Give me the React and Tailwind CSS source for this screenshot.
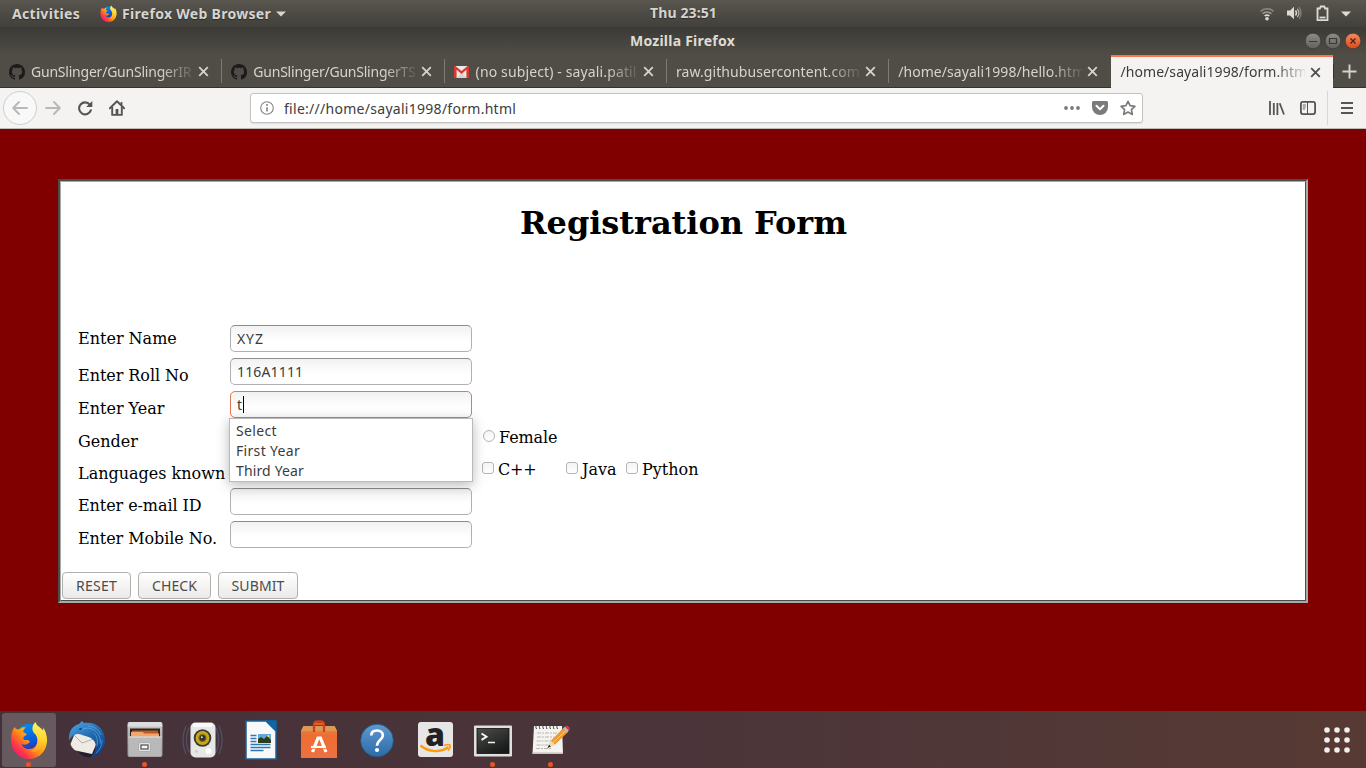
import React from 'react';

const CloseX = ({ color }) => (
  <svg width="11" height="11" viewBox="0 0 11 11" className="shrink-0">
    <path d="M1.2 1.2l8.6 8.6M9.8 1.2L1.2 9.8" stroke={color} strokeWidth="1.8" fill="none" />
  </svg>
);

const GithubIcon = () => (
  <svg width="16" height="16" viewBox="0 0 16 16" className="mt-px mr-1.5 shrink-0">
    <path
      fill="#1b1b1b"
      d="M8 0C3.58 0 0 3.58 0 8c0 3.54 2.29 6.53 5.47 7.59.4.07.55-.17.55-.38 0-.19-.01-.82-.01-1.49-2.01.37-2.53-.49-2.69-.94-.09-.23-.48-.94-.82-1.13-.28-.15-.68-.52-.01-.53.63-.01 1.08.58 1.23.82.72 1.21 1.87.87 2.33.66.07-.52.28-.87.51-1.07-1.78-.2-3.64-.89-3.64-3.95 0-.87.31-1.59.82-2.15-.08-.2-.36-1.02.08-2.12 0 0 .67-.21 2.2.82.64-.18 1.32-.27 2-.27s1.36.09 2 .27c1.53-1.04 2.2-.82 2.2-.82.44 1.1.16 1.92.08 2.12.51.56.82 1.27.82 2.15 0 3.07-1.87 3.75-3.65 3.95.29.25.54.73.54 1.48 0 1.07-.01 1.93-.01 2.2 0 .21.15.46.55.38A8.01 8.01 0 0 0 16 8c0-4.42-3.58-8-8-8z"
    />
  </svg>
);

const GmailIcon = () => (
  <svg width="15" height="12" viewBox="0 0 15 12" className="mt-0.5 mr-[7px] shrink-0">
    <path d="M1 0h13v12H1z" fill="#e9e9e9" />
    <path d="M2.6 12l4.9-5 4.900 5z" fill="#d4d4d4" />
    <path d="M0 1.2C0 .4.6 0 1.4 0L7.5 5 13.6 0c.8 0 1.4.4 1.4 1.2V11c0 .6-.4 1-1 1h-1.6V3.8L7.5 8 2.6 3.8V12H1c-.6 0-1-.4-1-1z" fill="#d9392e" />
  </svg>
);

const FirefoxLogo = ({ id, size }) => (
  <svg width={size} height={size} viewBox="0 0 36 38" className="shrink-0">
    <defs>
      <linearGradient id={id + 'a'} x1="1" y1="0.1" x2="0.1" y2="0.9">
        <stop offset="0" stopColor="#fff44f" />
        <stop offset="0.3" stopColor="#ffc21c" />
        <stop offset="0.55" stopColor="#ff8a16" />
        <stop offset="0.8" stopColor="#ff3647" />
        <stop offset="1" stopColor="#e31587" />
      </linearGradient>
      <linearGradient id={id + 'b'} x1="0.3" y1="0" x2="0.6" y2="1">
        <stop offset="0" stopColor="#0090ed" />
        <stop offset="0.6" stopColor="#0a5bdc" />
        <stop offset="1" stopColor="#3b2a9c" />
      </linearGradient>
      <linearGradient id={id + 'c'} x1="0.5" y1="0" x2="0.4" y2="1">
        <stop offset="0" stopColor="#fff36b" />
        <stop offset="0.55" stopColor="#ffd52e" />
        <stop offset="1" stopColor="#ff9a1f" />
      </linearGradient>
    </defs>
    <circle cx="18.5" cy="17" r="14" fill={`url(#${id}b)`} />
    <path d="M3.5 6C1.2 9 0 14 0 19.5 0 30 8 38 18 38s18-8 18-18.500c0-5-1.500-9-3.500-12 .5 7-2 10-5.500 12-1 5-4 8.500-9 8.500-3.500 0-6.500-2-7.500-5 2 1.200 4.500 1 6.500-.5 1.300-1 2-1 1.700-2-.7-1.800-3-1.300-4.700-1.400-1.500-.3-2-1.500-1.500-2.800.7-1.500 3-1.800 3.300-3 .1-.7-2.800-1.300-3.700-2.500.3-2 1.500-3.300 2.700-4.500-3-.3-5 .3-6.600 2C6.500 8.800 4.500 7.800 3.500 6z" fill={`url(#${id}a)`} />
    <path d="M24.500 1C20.500 5 20.500 9.500 24 13c2.500 2.500 3.200 7 1.500 11.500-1 3-3.500 5-6.500 6 7 1.500 14-2.500 16-9.500 1.200-5-.2-10.500-3-14.500l.3 3.300C30.500 6.500 25.500 5.500 24.500 1z" fill={`url(#${id}c)`} />
  </svg>
);

const Tab = ({ icon, title, track, last }) => (
  <div className="flex h-8 w-[222.300px] shrink-0 items-center pl-[9px]">
    {icon}
    <div className={'mt-px flex-1 overflow-hidden whitespace-nowrap text-[14px] leading-5 text-[#d6d3cd] [mask-image:linear-gradient(to_right,#000_calc(100%-32px),transparent_calc(100%+4px))] ' + track}>
      {title}
    </div>
    <div className="mt-px mr-[12px] ml-[5px]">
      <CloseX color="#d6d3cd" />
    </div>
    <div className={'h-6 w-px ' + (last ? 'bg-transparent' : 'bg-[#7c7a73]')} />
  </div>
);

const FieldRow = ({ label, first, height, track = '', children }) => (
  <div className={'flex ' + height}>
    <div className={'w-[152px] whitespace-nowrap text-[16px] leading-[19px] ' + (first ? 'pt-[4px] ' : 'pt-[8px] ') + track}>{label}</div>
    {children}
  </div>
);

const Input = ({ value, focus, track = '' }) => (
  <div
    className={
      "flex h-[27px] w-[242px] items-center rounded-[5px] border bg-linear-to-b from-[#f2f2f2] to-white to-60% pl-[6px] font-['Noto_Sans',sans-serif] text-[14px] leading-5 text-[#3c3c3c] " +
      (focus ? 'border-t-[#e07b55] border-r-[#e07b55] border-b-[#e07b55] border-l-[#e07b55] ' : 'border-t-[#8c8c8a] border-r-[#b0b0ae] border-b-[#b0b0ae] border-l-[#b0b0ae] ') + track
    }
  >
    {value}
    {focus && <span className="ml-px h-[17px] w-px bg-black" />}
  </div>
);

const Check = ({ label, box, round }) => (
  <div className={'flex items-center text-[16px] leading-[19px] ' + box}>
    <span className={'mt-[-2px] mr-[4px] size-3 shrink-0 border border-[#b4b4b2] bg-linear-to-b from-[#f4f4f4] to-white ' + (round ? 'rounded-full' : 'rounded-[3px]')} />
    {label}
  </div>
);

const Button = ({ label, size }) => (
  <div className={"flex h-[27px] items-center justify-center rounded-[4px] border border-[#b2b0ad] bg-linear-to-b from-white to-[#ebeae8] font-['Noto_Sans',sans-serif] text-[14px] leading-5 text-[#4c4c4c] " + size}>
    {label}
  </div>
);

const DockItem = ({ children, dot, active }) => (
  <div className={'relative flex h-[54px] w-[54px] shrink-0 items-center justify-center rounded-[3px] ' + (active ? 'bg-[#665a5e]' : '')}>
    {children}
    {dot && <span className="absolute bottom-0 left-[24px] size-[5px] rounded-full bg-[#e95420]" />}
  </div>
);

const Thunderbird = () => (
  <svg width="38" height="40" viewBox="0 0 38 40">
    <defs>
      <linearGradient id="tb" x1="0.2" y1="0" x2="0.8" y2="1">
        <stop offset="0" stopColor="#4b9fe0" />
        <stop offset="0.5" stopColor="#1f66ad" />
        <stop offset="1" stopColor="#0d3a83" />
      </linearGradient>
    </defs>
    <path d="M8 29c4 6 9 9 16 8l4-8z" fill="#241d2b" />
    <path d="M7 13L2.500 24c1 3 3 5.500 5 6.500L24 34l5-12-6-8z" fill="#eeebe5" />
    <path d="M6 15l8 8 3.500-1.200 8-2.800" fill="none" stroke="#b5b0aa" strokeWidth="1" />
    <path d="M1 21C0 11 5 5.500 11 4l3-3 2 2C28 1 37 9 37 20c0 9-6 16-15 18 4-4 7-9 5.500-14-1-4-4.500-6.500-8.500-7.500-5-1-8-4-13-1.500C3.500 16.500 2 18.500 1 21z" fill="url(#tb)" />
    <path d="M13 10.500c3-3 8-3 12-1 5 2.500 8 8 7 14M20 6c6 0 11 4 13 9M28 33c4-3 6-8 6-13M26 13c3 3 4 8 3 13" fill="none" stroke="#62b2ea" strokeWidth="0.9" opacity="0.7" />
    <path d="M10.500 9c1.500-1 3-1 4 0-1 1-3 1-4 0z" fill="#0a2f66" />
  </svg>
);

const Files = () => (
  <svg width="38" height="40" viewBox="0 0 38 40">
    <defs>
      <linearGradient id="fl" x1="0" y1="0" x2="0" y2="1">
        <stop offset="0" stopColor="#c9c9c9" />
        <stop offset="1" stopColor="#8e8e8e" />
      </linearGradient>
    </defs>
    <rect x="1.500" y="2" width="35" height="35" rx="2" fill="url(#fl)" />
    <path d="M3 2h32l1.500 4.500h-35z" fill="#dedede" />
    <rect x="4" y="8.500" width="30" height="9" fill="#2b2522" />
    <path d="M6 10.500h26v8H6z" fill="#c05b22" />
    <path d="M5 12h12l1 1.500h15v4H5z" fill="#f2a56c" />
    <rect x="2.500" y="16.500" width="33" height="20" rx="1" fill="#b9b9b9" />
    <path d="M2.500 17h33" stroke="#e2e2e2" />
    <rect x="12.500" y="22.500" width="12" height="9" rx="1.500" fill="#e4e4e4" stroke="#999" strokeWidth="0.6" />
    <rect x="15" y="25" width="7" height="4" fill="#f6f6f6" stroke="#4f4f4f" strokeWidth="1.200" />
  </svg>
);

const Rhythmbox = () => (
  <svg width="42" height="40" viewBox="0 0 42 40">
    <g fill="none" stroke="#60779c" strokeWidth="1.200" opacity="0.45">
      <path d="M7 8C3.500 15 3.500 25 7 32M4 6C0 15 0 25 4 34M34 8c3.500 7 3.500 17 0 24M37 6c4 9 4 19 0 28" />
    </g>
    <rect x="8.500" y="2.500" width="25" height="35" rx="5" fill="#e7e7e5" />
    <rect x="10.500" y="3" width="20" height="4" rx="2" fill="#fafafa" />
    <circle cx="20.500" cy="18" r="8.800" fill="#3c3b36" />
    <circle cx="20.500" cy="18" r="6.900" fill="#c9a918" />
    <circle cx="20.500" cy="18" r="4.200" fill="#8b7616" />
    <circle cx="20.500" cy="18" r="3" fill="#33322e" />
    <circle cx="19.800" cy="17.200" r="1" fill="#ddd" />
    <circle cx="14.500" cy="31.500" r="1.300" fill="#c8c8c8" />
    <circle cx="26.500" cy="31" r="3" fill="#fff" />
  </svg>
);

const Writer = () => (
  <svg width="34" height="42" viewBox="0 0 34 42">
    <path d="M2 2h20l10 10v28H2z" fill="#f8f8f8" stroke="#17619b" strokeWidth="1.500" />
    <path d="M21.500 1.300h11.200V12.500z" fill="#0a68a8" />
    <g stroke="#2c78b3" strokeWidth="1.300">
      <path d="M6.500 16.500h6M6.500 19.500h6M6.500 22.500h6M6.500 25.500h20M6.500 28.500h20M6.500 31.500h13" />
    </g>
    <rect x="14" y="15" width="13" height="9" fill="#62a8d8" />
    <path d="M14 24v-4l3-2 3 2 3-3 4 4v3z" fill="#2c3d1c" />
    <circle cx="24.500" cy="17" r="1.100" fill="#f4e54a" />
  </svg>
);

const Software = () => (
  <svg width="38" height="40" viewBox="0 0 38 40">
    <defs>
      <linearGradient id="sw" x1="0" y1="0" x2="0" y2="1">
        <stop offset="0" stopColor="#e9884b" />
        <stop offset="0.3" stopColor="#ef6d30" />
        <stop offset="1" stopColor="#ee7042" />
      </linearGradient>
    </defs>
    <path d="M3.500 6h31l2.500 5v27H1V11z" fill="url(#sw)" />
    <path d="M3.500 6h31l2.500 5H1z" fill="#dd9759" />
    <path d="M14 12V5c0-3 1.500-3.500 3.500-3.500h3c2 0 3.500.5 3.500 3.500v7" fill="none" stroke="#c8421a" strokeWidth="2.300" />
    <path d="M14.500 4h9" stroke="#e75f28" strokeWidth="2.500" />
    <path d="M12.500 32l5.500-14h2.500L26 32" fill="none" stroke="#fff" strokeWidth="3.200" />
    <path d="M11 27h15" stroke="#fff" strokeWidth="2.200" />
    <path d="M11 28.700h17" stroke="#ef6d30" strokeWidth="0.900" />
  </svg>
);

const Help = () => (
  <svg width="36" height="36" viewBox="0 0 36 36">
    <defs>
      <linearGradient id="hp" x1="0" y1="0" x2="0" y2="1">
        <stop offset="0" stopColor="#5e9ad0" />
        <stop offset="1" stopColor="#2d6ba8" />
      </linearGradient>
    </defs>
    <circle cx="18" cy="18.500" r="16.300" fill="url(#hp)" stroke="#245b92" strokeWidth="0.800" />
    <path d="M12.300 13.500c0-3.400 2.500-5 5.700-5 3.300 0 5.800 1.900 5.800 4.900 0 4.600-5.900 4.900-5.900 10.400" fill="none" stroke="#fff" strokeWidth="2.700" />
    <circle cx="18" cy="28" r="2.100" fill="#fff" />
  </svg>
);

const Amazon = () => (
  <div className="relative flex size-[35px] justify-center rounded-[3px] bg-[#e6e6e6]">
    <span className="mt-[-4px] font-['Open_Sans',sans-serif] text-[32px] leading-8 font-extrabold text-[#222]">a</span>
    <svg width="35" height="35" viewBox="0 0 35 35" className="absolute inset-0">
      <path d="M2.500 23.500c8.500 7 20 7.300 28 1.500" fill="none" stroke="#ff9a0c" strokeWidth="2.300" />
      <path d="M26 23.500c2.500-1 5-1.200 6-.4.500 1.200-.4 3.700-2 5.500" fill="none" stroke="#ff9a0c" strokeWidth="1.600" />
    </svg>
  </div>
);

const Terminal = () => (
  <svg width="40" height="34" viewBox="0 0 40 34" className="mt-0.5">
    <defs>
      <linearGradient id="tm" x1="0" y1="0" x2="0.600" y2="1">
        <stop offset="0" stopColor="#4b4e4a" />
        <stop offset="1" stopColor="#191b1a" />
      </linearGradient>
    </defs>
    <rect x="1" y="1.500" width="38" height="31" rx="1" fill="#e0dfdd" />
    <rect x="4" y="4.500" width="32" height="25" fill="url(#tm)" stroke="#111" strokeWidth="0.800" />
    <path d="M8.500 9.500l5 3.200-5 3.200" fill="none" stroke="#f5f5f5" strokeWidth="1.900" />
    <path d="M15 18.500h7" stroke="#f5f5f5" strokeWidth="1.500" />
  </svg>
);

const Notes = () => (
  <svg width="40" height="40" viewBox="0 0 40 40">
    <path d="M3 6h28l1 28H1.500z" fill="#f5f3ef" />
    <path d="M1.500 33.200h30.500" stroke="#c4c1bb" strokeWidth="1.500" />
    <g stroke="#3c3935" strokeWidth="1" fill="none">
      <path d="M5.500 9c-1.500-3 0-5 1.800-4M9 9c-1.500-3 0-5 1.800-4M12.500 9c-1.500-3 0-5 1.800-4M16 9c-1.500-3 0-5 1.800-4M19.500 9c-1.500-3 0-5 1.800-4M23 9c-1.500-3 0-5 1.800-4M26.500 9c-1.500-3 0-5 1.800-4" />
    </g>
    <g stroke="#b9b7b4" strokeWidth="1.100" strokeDasharray="4 1 2 1">
      <path d="M6 13h20M6 17h17M5.500 21h15M5.500 25h12M5 28.500h16" />
    </g>
    <path d="M16.500 28l3.500-7.500L32.500 8l4.500 4L24 24.500z" fill="#ee9a30" />
    <path d="M19 25.500l17-16" stroke="#fbd08a" strokeWidth="1" />
    <path d="M32 8.500l2-2 4 4-2 2z" fill="#bababa" />
    <path d="M34 6.500c2-2.500 6.500 1 4 4z" fill="#e3354b" />
    <path d="M16.500 28l3.500-7.300 3.800 3.800z" fill="#f3dbb5" />
    <path d="M16.500 28l1.600-3.300 1.800 1.800z" fill="#222" />
  </svg>
);

const dots = [4, 14, 24];

export default function App() {
  return (
    <div className="flex h-[768px] w-[1366px] flex-col overflow-hidden bg-[#800000] font-['Noto_Sans',sans-serif]">
      {/* Desktop top bar */}
      <div className="flex h-[27px] shrink-0 items-center justify-between bg-linear-to-b from-[#59564f] to-[#41403b] text-[14px] leading-5 font-bold text-[#d7d4ce] [text-shadow:0_1px_1px_#2b2a27]">
        <div className="flex w-[560px] items-center pl-3">
          <span className="w-[88px] tracking-[0.300px]">Activities</span>
          <FirefoxLogo id="fs" size={17} />
          <span className="ml-[5px] tracking-[0.300px]">Firefox Web Browser</span>
          <svg width="10" height="6" viewBox="0 0 10 6" className="ml-[5px]"><path d="M0 .5h10L5 5.500z" fill="#d7d4ce" /></svg>
        </div>
        <span className="mt-[-2px] ml-px tracking-[0.120px]">Thu 23:51</span>
        <div className="flex w-[560px] items-center justify-end pr-[15px]">
          <svg width="16" height="14" viewBox="0 0 16 14" className="mr-[11px]" fill="none">
            <path d="M1.500 4.500C5 .8 11 .8 14.500 4.500" stroke="#8a8882" strokeWidth="1.600" />
            <path d="M3.700 6.800c2.400-2.500 6.200-2.500 8.600 0" stroke="#a09d97" strokeWidth="1.600" />
            <path d="M5.700 9c1.300-1.300 3.300-1.300 4.600 0" stroke="#dedbd5" strokeWidth="1.700" />
            <circle cx="8" cy="11.800" r="1.800" fill="#dedbd5" />
          </svg>
          <svg width="16" height="14" viewBox="0 0 16 14" className="mr-[14px] mb-px" fill="none">
            <path d="M1 4.500h3L8 .8v12.400L4 9.500H1z" fill="#dedbd5" />
            <path d="M9.500 4.500c1.200 1.500 1.200 3.500 0 5" stroke="#dedbd5" strokeWidth="1.400" />
            <path d="M11.300 2.800c2 2.500 2 5.900 0 8.400" stroke="#b9b6b0" strokeWidth="1.300" />
            <path d="M13 1.200c2.700 3.400 2.700 8.200 0 11.600" stroke="#85837d" strokeWidth="1.200" />
          </svg>
          <svg width="13" height="17" viewBox="0 0 13 17" className="mr-[12px] mb-px" fill="none">
            <path d="M1.500 3.500h2.300l1-2h3.400l1 2h2.300v11.700h-10z" stroke="#dedbd5" strokeWidth="1.800" />
            <path d="M3.500 12.500h6" stroke="#dedbd5" strokeWidth="1.800" />
          </svg>
          <svg width="10" height="6" viewBox="0 0 10 6"><path d="M0 .5h10L5 5.500z" fill="#dedbd5" /></svg>
        </div>
      </div>

      {/* Window title */}
      <div className="flex h-[28px] shrink-0 items-center justify-between bg-linear-to-b from-[#3b3a36] to-[#504d46] text-[14px] leading-5 font-bold text-[#dfdbd2]">
        <span className="w-[59px]" />
        <span className="mt-[-1px] tracking-[0.240px]">Mozilla Firefox</span>
        <svg width="60" height="20" viewBox="0 0 60 20">
          <defs>
            <linearGradient id="wg" x1="0" y1="0" x2="0" y2="1"><stop offset="0" stopColor="#8f8c85" /><stop offset="1" stopColor="#62605a" /></linearGradient>
            <linearGradient id="wr" x1="0" y1="0" x2="0" y2="1"><stop offset="0" stopColor="#f58a63" /><stop offset="1" stopColor="#df4a18" /></linearGradient>
          </defs>
          <circle cx="7" cy="10" r="7.800" fill="url(#wg)" stroke="#33322e" strokeWidth="0.600" />
          <circle cx="27" cy="10" r="7.800" fill="url(#wg)" stroke="#33322e" strokeWidth="0.600" />
          <circle cx="47" cy="10" r="7.800" fill="url(#wr)" stroke="#33322e" strokeWidth="0.600" />
          <path d="M3 10.500h8M23.500 7.500h7v5h-7z" fill="none" stroke="#3a3934" strokeWidth="1.200" />
          <path d="M44.500 7.500l5 5M49.500 7.500l-5 5" stroke="#4a2418" strokeWidth="1.300" />
        </svg>
      </div>

      {/* Tab strip */}
      <div className="flex h-[33px] shrink-0 items-center border-b border-[#33322e] bg-[#504d46]">
        <Tab icon={<GithubIcon />} title="GunSlinger/GunSlingerIR" track="tracking-[-0.220px]" />
        <Tab icon={<GithubIcon />} title="GunSlinger/GunSlingerTS" track="tracking-[-0.220px]" />
        <Tab icon={<GmailIcon />} title="(no subject) - sayali.patil" track="tracking-[0.130px]" />
        <Tab title="raw.githubusercontent.com" track="tracking-[0.080px]" />
        <Tab title="/home/sayali1998/hello.htm" track="tracking-[0.060px]" last />
        <div className="mb-[-1px] flex h-[33px] w-[221.500px] shrink-0 items-center border-t-2 border-[#f4784c] bg-[#f4f3f2] pl-[9px]">
          <div className="mt-[-2px] flex-1 overflow-hidden text-[14px] leading-5 tracking-[0.060px] whitespace-nowrap text-[#3c3c3c] [mask-image:linear-gradient(to_right,#000_calc(100%-32px),transparent_calc(100%+4px))]">
            /home/sayali1998/form.htm
          </div>
          <div className="mt-[-1px] mr-[12px] ml-[5px]"><CloseX color="#4f4e4b" /></div>
        </div>
        <div className="flex flex-1 items-center justify-center border-l border-[#33322e]">
          <svg width="15" height="15" viewBox="0 0 15 15"><path d="M7.500 .5v14M.5 7.500h14" stroke="#d6d3cd" strokeWidth="1.900" /></svg>
        </div>
      </div>

      {/* Navigation toolbar */}
      <div className="flex h-[41px] shrink-0 items-center border-b border-[#bdbdbb] bg-[#f4f3f2]">
        <div className="ml-[3px] flex size-[34px] items-center justify-center rounded-full border border-[#cfcdcb] bg-[#f9f8f8]">
          <svg width="16" height="14" viewBox="0 0 16 14" fill="none" stroke="#b9b8b6" strokeWidth="1.900" strokeLinecap="round" strokeLinejoin="round"><path d="M15 7H1.500M7 1L1.200 7 7 13" /></svg>
        </div>
        <svg width="16" height="14" viewBox="0 0 16 14" className="ml-[8px]" fill="none" stroke="#b9b8b6" strokeWidth="1.900" strokeLinecap="round" strokeLinejoin="round"><path d="M1 7h13.500M9 1l5.800 6L9 13" /></svg>
        <svg width="16" height="16" viewBox="0 0 16 16" className="ml-[16px]" fill="none">
          <path d="M12.800 4.600A6 6 0 1 0 13.800 10.300" stroke="#565553" strokeWidth="2.100" strokeLinecap="round" />
          <path d="M15.300 1v6H9.200z" fill="#565553" />
        </svg>
        <svg width="16" height="16" viewBox="0 0 16 16" className="ml-[16px]" fill="none" stroke="#565553">
          <path d="M.9 8.300L8 1.300l7.100 7" strokeWidth="1.900" strokeLinecap="round" strokeLinejoin="round" />
          <path d="M3.200 7v7.900h9.600V7" strokeWidth="1.900" strokeLinejoin="round" />
          <path d="M12.500 2v3" strokeWidth="1.800" />
          <path d="M8 9v5.500" strokeWidth="2.800" />
        </svg>
        <div className="ml-[125px] flex h-[30px] w-[893px] items-center rounded-[3px] border border-[#c3c2c0] bg-white shadow-[0_1px_1px_rgba(0,0,0,0.08)]">
          <svg width="14" height="14" viewBox="0 0 14 14" className="ml-[9px]" fill="none">
            <circle cx="7" cy="7" r="6.300" stroke="#838281" strokeWidth="1.100" />
            <path d="M7 6.200v4.300" stroke="#737271" strokeWidth="1.400" /><circle cx="7" cy="4" r="0.900" fill="#737271" />
          </svg>
          <span className="mt-px ml-[10px] flex-1 text-[14px] leading-5 tracking-[0.280px] text-[#3c3c3c]">file:///home/sayali1998/form.html</span>
          <svg width="16" height="4" viewBox="0 0 16 4" fill="#7c7b7a"><circle cx="2" cy="2" r="1.900" /><circle cx="8" cy="2" r="1.900" /><circle cx="14" cy="2" r="1.900" /></svg>
          <svg width="16" height="14" viewBox="0 0 16 14" className="ml-[12px]"><path d="M1.500 0h13c.8 0 1.500.6 1.500 1.500V6a8 8 0 0 1-16 0V1.500C0 .6.700 0 1.500 0z" fill="#7c7b7a" /><path d="M4.500 4.800L8 8.200l3.500-3.400" fill="none" stroke="#fff" strokeWidth="2" strokeLinecap="round" strokeLinejoin="round" /></svg>
          <svg width="16" height="16" viewBox="0 0 16 16" className="mr-[6px] ml-[12px]"><path d="M8 1.300l2.100 4.300 4.800.7-3.500 3.300.9 4.800L8 12.100l-4.300 2.300.9-4.800L1.100 6.300l4.800-.7z" fill="none" stroke="#7c7b7a" strokeWidth="1.700" strokeLinejoin="round" /></svg>
        </div>
        <svg width="16" height="14" viewBox="0 0 16 14" className="ml-[126px]" stroke="#565553" strokeWidth="1.800"><path d="M1 0v14M4.800 2v12M8.400 2v12M10.700 2.300L15 13.500" /></svg>
        <svg width="16" height="14" viewBox="0 0 16 14" className="ml-[15px]" fill="none"><rect x=".9" y=".9" width="14.200" height="12.200" rx="2" stroke="#565553" strokeWidth="1.800" /><path d="M7.500 1v12" stroke="#565553" /><path d="M2.800 4h3M2.800 6h3M2.800 8h2.200" stroke="#565553" strokeWidth="0.900" /></svg>
        <div className="ml-[11px] h-[34px] w-px bg-[#d8d7d5]" />
        <svg width="12" height="12" viewBox="0 0 12 12" className="ml-[13px]" stroke="#565553" strokeWidth="2"><path d="M0 1h12M0 6h12M0 11h12" /></svg>
      </div>

      {/* Page */}
      <div className="flex flex-1 justify-center pt-[50px] font-['DejaVu_Serif',serif] text-black">
        <div className="h-[424px] w-[1250px] border-2 border-t-[#4c4c4c] border-r-[#a9a9a9] border-b-[#a9a9a9] border-l-[#4c4c4c]">
          <div className="flex h-full flex-col border border-t-[#a9a9a9] border-r-[#4c4c4c] border-b-[#4c4c4c] border-l-[#a9a9a9] bg-white">
            <h1 className="mt-[23px] pl-px text-center text-[32px] leading-[37px] font-bold tracking-[-0.040px]">Registration Form</h1>
            <div className="mt-[83px] flex flex-col pl-[17px]">
              <FieldRow label="Enter Name" first height="h-[33px]"><Input value="XYZ" track="tracking-[0.900px]" /></FieldRow>
              <FieldRow label="Enter Roll No" height="h-[33px]" track="tracking-[-0.050px]"><Input value="116A1111" track="tracking-[0.150px]" /></FieldRow>
              <FieldRow label="Enter Year" height="h-[33px]">
                <div className="relative h-[27px]">
                  <Input value="t" focus />
                  <div className="absolute top-[27px] left-[-1px] z-10 h-[64px] w-[244px] border border-[#bcbab8] bg-white pt-[2px] pl-[6px] font-['Noto_Sans',sans-serif] text-[14px] leading-5 text-[#3c3c3c] shadow-[0_3px_12px_rgba(0,0,0,0.28)]">
                    <p className="tracking-[0.350px]">Select</p>
                    <p className="tracking-[0.320px]">First Year</p>
                    <p className="tracking-[0.140px]">Third Year</p>
                  </div>
                </div>
              </FieldRow>
              <FieldRow label="Gender" height="h-[32px]">
                <Check label="Female" round box="ml-[253px] h-[26px] tracking-[-0.100px]" />
              </FieldRow>
              <FieldRow label="Languages known" height="h-[32px]">
                <Check label="C++" box="ml-[252px] h-[26px] w-[84px] tracking-[-0.200px]" />
                <Check label="Java" box="h-[26px] w-[60px]" />
                <Check label="Python" box="h-[26px]" />
              </FieldRow>
              <FieldRow label="Enter e-mail ID" height="h-[33px]" track="tracking-[-0.080px]"><Input /></FieldRow>
              <FieldRow label="Enter Mobile No." height="h-[51px]" track="tracking-[-0.070px]"><Input /></FieldRow>
            </div>
            <div className="flex gap-[7px] pl-px">
              <Button label="RESET" size="w-[69px] tracking-[0.250px]" />
              <Button label="CHECK" size="w-[73px] tracking-[0.100px]" />
              <Button label="SUBMIT" size="w-[80px] tracking-[0.120px]" />
            </div>
          </div>
        </div>
      </div>

      {/* Dock */}
      <div className="flex h-[57px] shrink-0 items-center gap-1 bg-linear-to-r from-[#453139] via-[#4b353a] to-[#573a33] pr-[15px] pl-[2px]">
        <DockItem active dot><FirefoxLogo id="fd" size={38} /></DockItem>
        <DockItem><Thunderbird /></DockItem>
        <DockItem dot><Files /></DockItem>
        <DockItem><Rhythmbox /></DockItem>
        <DockItem><Writer /></DockItem>
        <DockItem><Software /></DockItem>
        <DockItem><Help /></DockItem>
        <DockItem><Amazon /></DockItem>
        <DockItem dot><Terminal /></DockItem>
        <DockItem dot><Notes /></DockItem>
        <svg width="28" height="28" viewBox="0 0 28 28" className="ml-auto" fill="#f2f0ef">
          {dots.map((y) => dots.map((x) => <circle key={x + '-' + y} cx={x} cy={y} r="2.800" />))}
        </svg>
      </div>
    </div>
  );
}
